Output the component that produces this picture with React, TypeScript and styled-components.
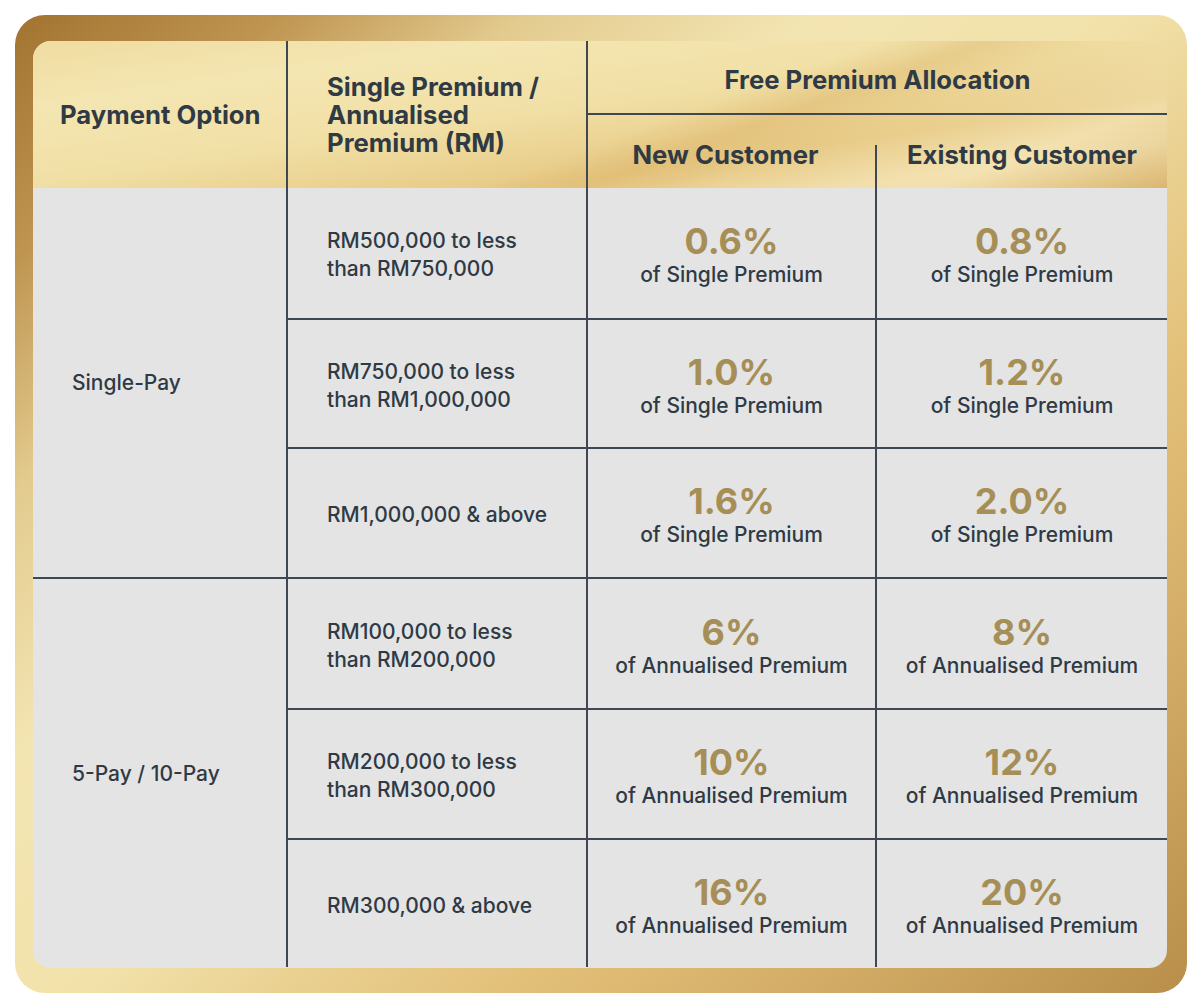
import React from "react";
import styled, { createGlobalStyle } from "styled-components";

const GlobalStyle = createGlobalStyle`
  html, body {
    margin: 0;
    padding: 0;
    background: #ffffff;
  }
  body {
    font-family: Inter, "Noto Sans", "Liberation Sans", sans-serif;
    color: #2f3a45;
  }
  * { box-sizing: border-box; }
`;

const LINE = "#3f4852";
const INK = "#2f3a45";
const GOLD = "#a68e57";

const Page = styled.div`
  padding: 15px 13px 14px 15px;
  width: 1200px;
`;

const Frame = styled.div`
  width: 1172px;
  height: 978px;
  border-radius: 30px;
  padding: 26px 20px 25px 18px;
  background: linear-gradient(
    137deg,
    #a27330 0%,
    #bf9551 12%,
    #e3cb8f 23%,
    #f3e5b2 36%,
    #f2e2aa 50%,
    #e9cf8f 60%,
    #e2bf78 70%,
    #d4ae68 82%,
    #b88e4a 100%
  );
`;

const Panel = styled.div`
  width: 100%;
  height: 100%;
  border-radius: 18px;
  overflow: hidden;
  background: #e4e4e4;
  display: flex;
  flex-direction: column;
`;

const Header = styled.div`
  display: grid;
  grid-template-columns: 255px 300px 1fr;
  height: 147px;
  background:
    linear-gradient(
      160deg,
      rgba(255, 255, 255, 0) 0%,
      rgba(255, 255, 255, 0) 55%,
      rgba(214, 170, 92, 0.35) 62%,
      rgba(255, 255, 255, 0) 70%,
      rgba(255, 248, 215, 0.35) 85%,
      rgba(200, 158, 85, 0.35) 100%
    ),
    linear-gradient(
      172deg,
      #efdca0 0%,
      #f4e6b2 22%,
      #f1e0a6 45%,
      #e7ca86 70%,
      #eed8a0 85%,
      #e4c47f 100%
    );
`;

const HeadCell = styled.div<{ $pad: number }>`
  display: flex;
  align-items: center;
  padding-left: ${(p) => p.$pad}px;
  border-right: 2px solid ${LINE};
  font-weight: 700;
  font-size: 25.7px;
  line-height: 28px;
  color: ${INK};
`;

const AllocGroup = styled.div`
  display: grid;
  grid-template-rows: 74px 1fr;
`;

const AllocTitle = styled.div`
  display: flex;
  align-items: center;
  justify-content: center;
  border-bottom: 2px solid ${LINE};
  font-weight: 700;
  font-size: 25.7px;
  padding-top: 4px;
  color: ${INK};
`;

const SubRow = styled.div`
  display: grid;
  grid-template-columns: 287px 2px 1fr;
`;

const SubCell = styled.div<{ $shift: number }>`
  display: flex;
  align-items: center;
  justify-content: center;
  padding-right: ${(p) => p.$shift}px;
  padding-top: 6px;
  font-weight: 700;
  font-size: 25.7px;
  color: ${INK};
`;

const SubDivider = styled.div`
  align-self: end;
  height: 43px;
  background: ${LINE};
`;

const Group = styled.div<{ $last: boolean }>`
  display: grid;
  grid-template-columns: 255px 1fr;
  border-bottom: ${(p) => (p.$last ? "none" : `2px solid ${LINE}`)};
`;

const GroupLabel = styled.div`
  display: flex;
  align-items: center;
  padding-left: 39px;
  border-right: 2px solid ${LINE};
  font-size: 21px;
  font-weight: 500;
  color: ${INK};
`;

const GroupRows = styled.div`
  display: flex;
  flex-direction: column;
`;

const Row = styled.div<{ $h: number; $last: boolean }>`
  display: grid;
  grid-template-columns: 300px 289px 1fr;
  height: ${(p) => p.$h}px;
  border-bottom: ${(p) => (p.$last ? "none" : `2px solid ${LINE}`)};
`;

const RangeCell = styled.div`
  display: flex;
  flex-direction: column;
  justify-content: center;
  padding-left: 39px;
  padding-top: 4px;
  border-right: 2px solid ${LINE};
  font-size: 21px;
  font-weight: 500;
  line-height: 28px;
  color: ${INK};
`;

const RateCell = styled.div<{ $divider: boolean }>`
  display: flex;
  flex-direction: column;
  align-items: center;
  justify-content: center;
  padding-top: 4px;
  border-right: ${(p) => (p.$divider ? `2px solid ${LINE}` : "none")};
`;

const Rate = styled.div`
  font-weight: 700;
  font-size: 36px;
  line-height: 40px;
  color: ${GOLD};
`;

const Basis = styled.div`
  font-size: 21px;
  font-weight: 500;
  line-height: 28px;
  color: ${INK};
`;

type RowData = { range: string[]; n: string; e: string; basis: string; h: number };
type GroupData = { label: string; rows: RowData[] };

const SP = "of Single Premium";
const AP = "of Annualised Premium";

const groups: GroupData[] = [
  {
    label: "Single-Pay",
    rows: [
      { range: ["RM500,000 to less", "than RM750,000"], n: "0.6%", e: "0.8%", basis: SP, h: 132 },
      { range: ["RM750,000 to less", "than RM1,000,000"], n: "1.0%", e: "1.2%", basis: SP, h: 129 },
      { range: ["RM1,000,000 & above"], n: "1.6%", e: "2.0%", basis: SP, h: 128 },
    ],
  },
  {
    label: "5-Pay / 10-Pay",
    rows: [
      { range: ["RM100,000 to less", "than RM200,000"], n: "6%", e: "8%", basis: AP, h: 131 },
      { range: ["RM200,000 to less", "than RM300,000"], n: "10%", e: "12%", basis: AP, h: 130 },
      { range: ["RM300,000 & above"], n: "16%", e: "20%", basis: AP, h: 127 },
    ],
  },
];

export default function App() {
  return (
    <>
      <GlobalStyle />
      <Page>
        <Frame>
          <Panel>
            <Header>
              <HeadCell $pad={27}>Payment Option</HeadCell>
              <HeadCell $pad={39}>
                Single Premium /<br />
                Annualised
                <br />
                Premium (RM)
              </HeadCell>
              <AllocGroup>
                <AllocTitle>Free Premium Allocation</AllocTitle>
                <SubRow>
                  <SubCell $shift={12}>New Customer</SubCell>
                  <SubDivider />
                  <SubCell $shift={0}>Existing Customer</SubCell>
                </SubRow>
              </AllocGroup>
            </Header>
            {groups.map((g, gi) => (
              <Group key={g.label} $last={gi === groups.length - 1}>
                <GroupLabel>{g.label}</GroupLabel>
                <GroupRows>
                  {g.rows.map((r, ri) => (
                    <Row key={ri} $h={r.h} $last={ri === g.rows.length - 1}>
                      <RangeCell>
                        {r.range.map((t) => (
                          <span key={t}>{t}</span>
                        ))}
                      </RangeCell>
                      <RateCell $divider>
                        <Rate>{r.n}</Rate>
                        <Basis>{r.basis}</Basis>
                      </RateCell>
                      <RateCell $divider={false}>
                        <Rate>{r.e}</Rate>
                        <Basis>{r.basis}</Basis>
                      </RateCell>
                    </Row>
                  ))}
                </GroupRows>
              </Group>
            ))}
          </Panel>
        </Frame>
      </Page>
    </>
  );
}
